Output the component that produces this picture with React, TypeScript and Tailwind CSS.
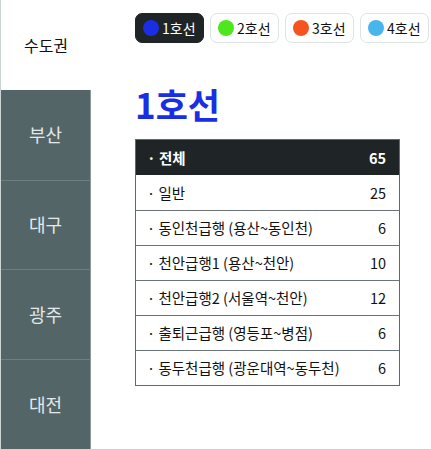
import React from 'react';

const regions = ['부산', '대구', '광주', '대전'];

const lines = [
  { name: '1호선', color: 'bg-[#1a2fe3]', active: true },
  { name: '2호선', color: 'bg-[#4ee61c]', active: false },
  { name: '3호선', color: 'bg-[#f5531f]', active: false },
  { name: '4호선', color: 'bg-[#47b6ec]', active: false },
];

const rows = [
  { label: '일반', count: 25 },
  { label: '동인천급행 (용산~동인천)', count: 6 },
  { label: '천안급행1 (용산~천안)', count: 10 },
  { label: '천안급행2 (서울역~천안)', count: 12 },
  { label: '출퇴근급행 (영등포~병점)', count: 6 },
  { label: '동두천급행 (광운대역~동두천)', count: 6 },
];

export default function App() {
  return (
    <div
      className="flex h-[450px] w-[431px] border-l border-b border-[#cdd4d4] bg-white text-[#111]"
      style={{ fontFamily: '"Noto Sans CJK KR", "Noto Sans", sans-serif' }}
    >
      {/* Sidebar */}
      <div className="flex w-[90px] shrink-0 flex-col">
        <div className="flex h-[90px] items-center justify-center bg-white text-[16px] text-[#111]">
          수도권
        </div>
        {regions.map((r, i) => (
          <div
            key={r}
            className={`flex h-[90px] items-center justify-center border-r border-[#8b9a9b] bg-[#536567] text-[18px] text-[#e3e8e8] ${
              i > 0 ? 'border-t border-t-[#6e7f80]' : ''
            }`}
          >
            {r}
          </div>
        ))}
      </div>

      {/* Main */}
      <div className="flex flex-1 flex-col pl-[44px] pt-[13px]">
        <div className="flex gap-[6px]">
          {lines.map((l) => (
            <div
              key={l.name}
              className={`flex h-[30px] w-[69px] items-center gap-[3px] rounded-[7px] border pl-[7px] text-[14px] ${
                l.active
                  ? 'border-[#1f2427] bg-[#1f2427] text-white'
                  : 'border-[#dde3e3] bg-white text-[#111]'
              }`}
            >
              <span className={`h-[16px] w-[16px] rounded-full ${l.color}`} />
              {l.name}
            </div>
          ))}
        </div>

        <h1 className="mt-[40px] text-[35px] font-bold leading-[42px] text-[#1a2fe3]">1호선</h1>

        <div className="mt-[14px] w-[265px] border border-[#5f6a6f] text-[14.5px]">
          <div className="flex h-[35px] items-center justify-between bg-[#1f2427] pl-[11px] pr-[13px] font-bold text-white">
            <span>· 전체</span>
            <span>65</span>
          </div>
          {rows.map((r, i) => (
            <div
              key={r.label}
              className={`flex h-[35px] items-center justify-between pl-[11px] pr-[13px] ${
                i > 0 ? 'border-t border-[#6a757a]' : ''
              }`}
            >
              <span>· {r.label}</span>
              <span>{r.count}</span>
            </div>
          ))}
        </div>
      </div>
    </div>
  );
}
